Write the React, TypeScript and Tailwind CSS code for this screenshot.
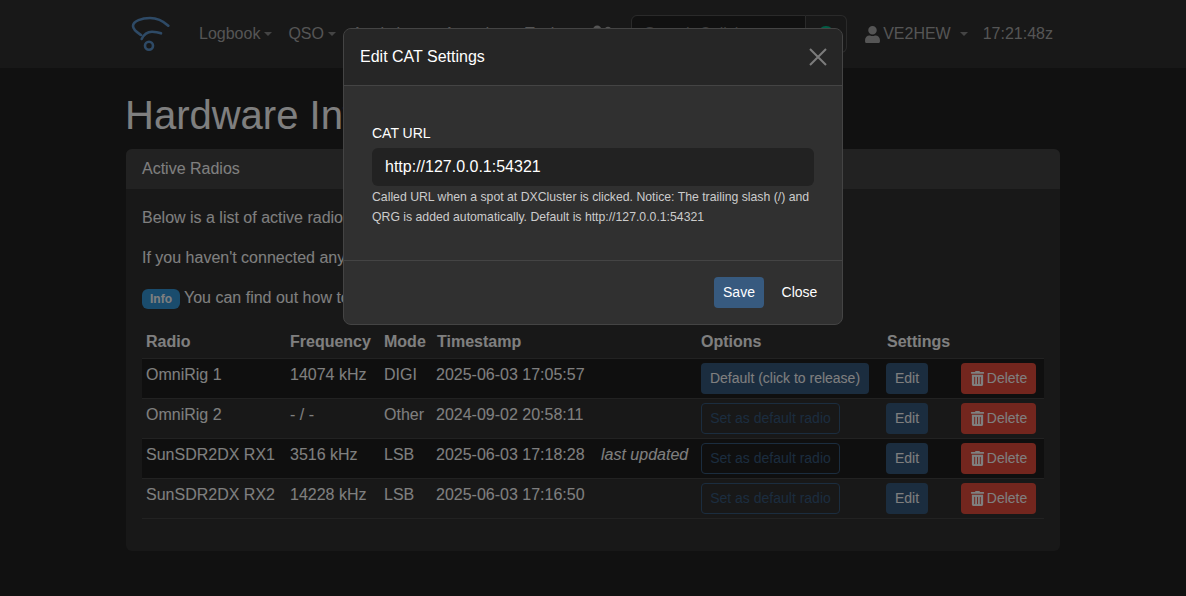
import { FaTrashAlt, FaUser, FaUserFriends } from "react-icons/fa";

const rows = [
  { radio: "OmniRig 1", freq: "14074 kHz", mode: "DIGI", ts: "2025-06-03 17:05:57", note: "", def: true },
  { radio: "OmniRig 2", freq: "- / -", mode: "Other", ts: "2024-09-02 20:58:11", note: "", def: false },
  { radio: "SunSDR2DX RX1", freq: "3516 kHz", mode: "LSB", ts: "2025-06-03 17:18:28", note: "last updated", def: false },
  { radio: "SunSDR2DX RX2", freq: "14228 kHz", mode: "LSB", ts: "2025-06-03 17:16:50", note: "", def: false },
];

function Caret() {
  return <span className="ml-[4px] inline-block align-[3px] border-x-[4px] border-t-[4px] border-x-transparent border-t-[#888]" />;
}

function NavLink({ label }: { label: string }) {
  return (
    <span className="text-[#aaa] whitespace-nowrap">
      {label}
      <Caret />
    </span>
  );
}

function Logo() {
  return (
    <svg width="40" height="40" viewBox="0 0 40 40" fill="none" stroke="#5c94cc" strokeWidth="2.6" strokeLinecap="round">
      <path d="M38.3 11.7 C32 6 26 4 20 4 C12 4 3 7 3 12 C3 16 8 19 11 21" />
      <path d="M11.7 25 C14 20 17 17.7 22 17.7 C26 17.7 29 18.5 31 19.3" />
      <circle cx="19" cy="31.7" r="4" />
    </svg>
  );
}

export default function App() {
  return (
    <div className="relative h-[596px] w-full overflow-hidden bg-[#222] text-white font-['Liberation_Sans',Arial,sans-serif] text-[16px]">
      <nav className="flex h-[68px] items-center bg-[#303030] pl-[130px]">
        <Logo />
        <div className="ml-[29px] flex items-center gap-[16px]">
          <NavLink label="Logbook" />
          <NavLink label="QSO" />
          <NavLink label="Analytics" />
          <NavLink label="Awards" />
          <NavLink label="Tools" />
          <FaUserFriends className="text-[#aaa]" size={24} />
        </div>
        <div className="ml-auto mr-[133px] flex items-center">
          <div className="flex h-[38px] w-[216px]">
            <div className="flex-1 rounded-l-[6px] border border-[#555] bg-[#222] px-[12px] py-[6px] text-[#777]">Search Callsign</div>
            <div className="flex w-[41px] items-center justify-center rounded-r-[6px] border border-l-0 border-[#555]">
              <span className="h-[16px] w-[16px] rounded-full border-2 border-[#00bc8c]" />
            </div>
          </div>
          <FaUser className="ml-[17px] text-[#aaa]" size={17} />
          <span className="ml-[2px] text-[#aaa]">VE2HEW</span>
          <span className="ml-[5px]"><Caret /></span>
          <span className="ml-[15px] text-[#aaa]">17:21:48z</span>
        </div>
      </nav>

      <main className="mx-auto w-[934px]">
        <h1 className="-ml-[1px] mt-[23px] h-[58px] text-[40px] leading-[48px] font-normal">Hardware Interfaces</h1>
        <section className="h-[402px] rounded-[6px] bg-[#303030]">
          <header className="h-[40px] rounded-t-[6px] bg-[#444] px-[16px] py-[8px] leading-[24px]">Active Radios</header>
          <div className="px-[16px] pt-[17px]">
            <p className="mb-[16px] leading-[24px]">Below is a list of active radios that are connected to Wavelog.</p>
            <p className="mb-[16px] leading-[24px]">If you haven't connected any radios yet, see the API page to generate API keys.</p>
            <p className="leading-[24px]">
              <span className="mr-[4px] inline-block rounded-[6px] bg-[#3498db] px-[8px] py-[4px] align-baseline text-[12px] leading-[12px] font-bold">Info</span>
              You can find out how to use the radio functions in the wiki.
            </p>
            <table className="mt-[11px] w-[902px] table-fixed border-collapse">
              <thead>
                <tr className="h-[37px] border-b border-[#444] text-left">
                  <th className="w-[144px] px-[4px] pt-[6px] font-bold">Radio</th>
                  <th className="w-[94px] px-[4px] pt-[6px] font-bold">Frequency</th>
                  <th className="w-[53px] px-[4px] pt-[6px] font-bold">Mode</th>
                  <th className="w-[264px] px-[4px] pt-[6px] font-bold">Timestamp</th>
                  <th className="w-[186px] px-[4px] pt-[6px] font-bold">Options</th>
                  <th className="w-[75px] px-[4px] pt-[6px] font-bold">Settings</th>
                  <th className="px-[4px]" />
                </tr>
              </thead>
              <tbody>
                {rows.map((r, i) => (
                  <tr key={r.radio} className={`h-[40px] border-b border-[#444] ${i % 2 === 0 ? "bg-[#1e1e1e]" : ""}`}>
                    <td className="px-[4px] pb-[7px]">{r.radio}</td>
                    <td className="px-[4px] pb-[7px]">{r.freq}</td>
                    <td className="px-[4px] pb-[7px]">{r.mode}</td>
                    <td className="px-[3px] pb-[7px]">
                      <span className="flex">
                        <span className="w-[165px]">{r.ts}</span>
                        <em>{r.note}</em>
                      </span>
                    </td>
                    <td className="px-[4px]">
                      {r.def ? (
                        <button className="h-[31px] w-[168px] rounded-[4px] bg-[#375a7f] text-[14px] whitespace-nowrap">Default (click to release)</button>
                      ) : (
                        <button className="h-[31px] w-[139px] rounded-[4px] border border-[#375a7f] text-[14px] whitespace-nowrap text-[#375a7f]">Set as default radio</button>
                      )}
                    </td>
                    <td className="px-[3px]">
                      <button className="h-[31px] w-[42px] rounded-[4px] bg-[#375a7f] text-[14px]">Edit</button>
                    </td>
                    <td className="pl-[3px]">
                      <button className="flex h-[31px] w-[75px] items-center justify-center gap-[2px] rounded-[4px] bg-[#e74c3c] text-[14px]">
                        <FaTrashAlt size={15} />
                        Delete
                      </button>
                    </td>
                  </tr>
                ))}
              </tbody>
            </table>
          </div>
        </section>
      </main>

      <div className="absolute inset-0 bg-black/50" />

      <div className="absolute left-[343px] top-[28px] h-[297px] w-[500px] overflow-hidden rounded-[8px] border border-[#444] bg-[#303030]">
        <div className="flex h-[57px] items-center justify-between border-b border-[#444] bg-[#262626] pl-[16px] pr-[15px]">
          <span>Edit CAT Settings</span>
          <svg width="18" height="18" viewBox="0 0 18 18" stroke="#7c7c7c" strokeWidth="2" fill="none">
            <path d="M1 1 L17 17 M17 1 L1 17" />
          </svg>
        </div>
        <div className="h-[175px] border-b border-[#444] px-[28px] pt-[37px]">
          <label className="block text-[14px] leading-[21px]">CAT URL</label>
          <div className="mt-[4px] flex h-[38px] items-center rounded-[6px] bg-[#222] px-[13px]">http://127.0.0.1:54321</div>
          <p className="mt-[1px] text-[12.25px] leading-[20px] text-[#ccc]">
            Called URL when a spot at DXCluster is clicked. Notice: The trailing slash (/) and QRG is added automatically. Default is http://127.0.0.1:54321
          </p>
        </div>
        <div className="flex items-center justify-end gap-[9px] pr-[16px] pt-[16px]">
          <button className="h-[31px] w-[50px] rounded-[4px] bg-[#375a7f] text-[14px]">Save</button>
          <button className="h-[31px] w-[53px] text-[14px]">Close</button>
        </div>
      </div>
    </div>
  );
}
